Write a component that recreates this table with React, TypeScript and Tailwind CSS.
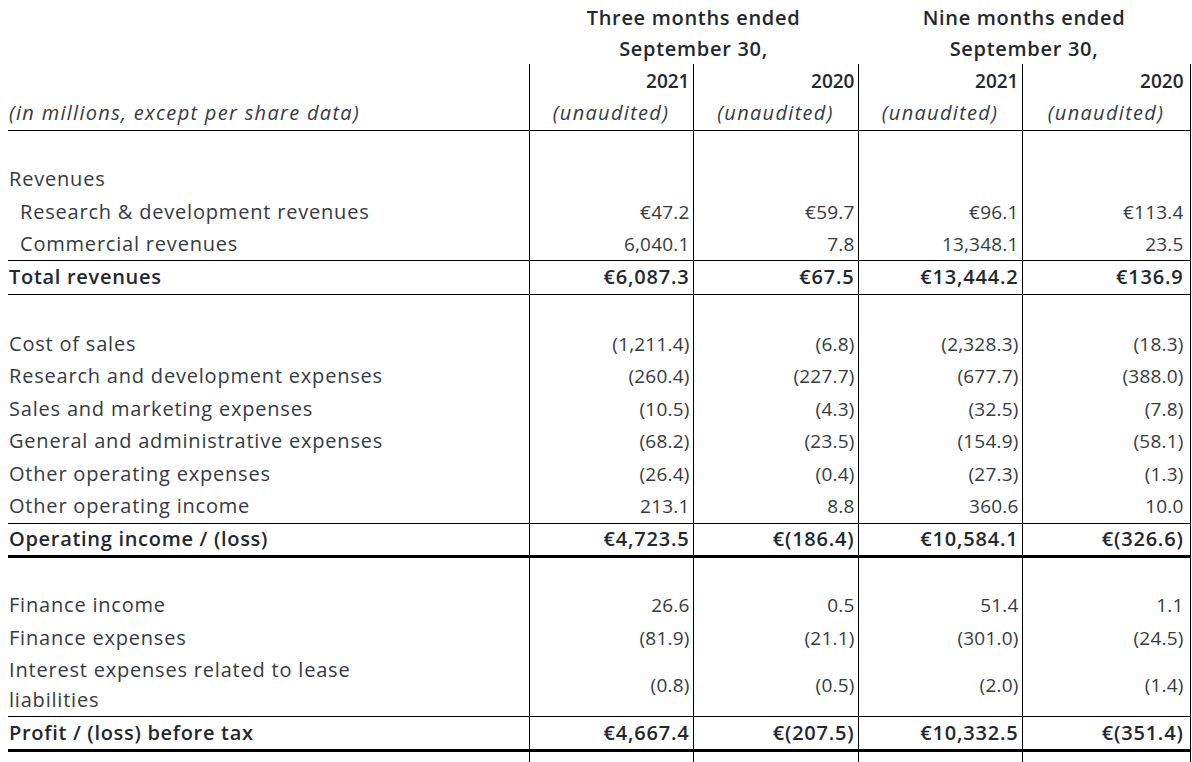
type Kind = 'blank' | 'head' | 'item' | 'sub' | 'total';

interface Row {
  kind: Kind;
  label?: string;
  values?: string[];
  h: number;
  lineBelow?: 'thin' | 'thick';
  wrap?: boolean;
}

const rows: Row[] = [
  { kind: 'blank', h: 33 },
  { kind: 'head', label: 'Revenues', h: 32 },
  { kind: 'sub', label: 'Research & development revenues', values: ['€47.2', '€59.7', '€96.1', '€113.4'], h: 33 },
  { kind: 'sub', label: 'Commercial revenues', values: ['6,040.1', '7.8', '13,348.1', '23.5'], h: 32, lineBelow: 'thin' },
  { kind: 'total', label: 'Total revenues', values: ['€6,087.3', '€67.5', '€13,444.2', '€136.9'], h: 34, lineBelow: 'thin' },
  { kind: 'blank', h: 33 },
  { kind: 'item', label: 'Cost of sales', values: ['(1,211.4)', '(6.8)', '(2,328.3)', '(18.3)'], h: 33 },
  { kind: 'item', label: 'Research and development expenses', values: ['(260.4)', '(227.7)', '(677.7)', '(388.0)'], h: 32 },
  { kind: 'item', label: 'Sales and marketing expenses', values: ['(10.5)', '(4.3)', '(32.5)', '(7.8)'], h: 33 },
  { kind: 'item', label: 'General and administrative expenses', values: ['(68.2)', '(23.5)', '(154.9)', '(58.1)'], h: 32 },
  { kind: 'item', label: 'Other operating expenses', values: ['(26.4)', '(0.4)', '(27.3)', '(1.3)'], h: 33 },
  { kind: 'item', label: 'Other operating income', values: ['213.1', '8.8', '360.6', '10.0'], h: 33, lineBelow: 'thin' },
  { kind: 'total', label: 'Operating income / (loss)', values: ['€4,723.5', '€(186.4)', '€10,584.1', '€(326.6)'], h: 33, lineBelow: 'thick' },
  { kind: 'blank', h: 33 },
  { kind: 'item', label: 'Finance income', values: ['26.6', '0.5', '51.4', '1.1'], h: 32 },
  { kind: 'item', label: 'Finance expenses', values: ['(81.9)', '(21.1)', '(301.0)', '(24.5)'], h: 33 },
  { kind: 'item', label: 'Interest expenses related to lease liabilities', values: ['(0.8)', '(0.5)', '(2.0)', '(1.4)'], h: 62, lineBelow: 'thin', wrap: true },
  { kind: 'total', label: 'Profit / (loss) before tax', values: ['€4,667.4', '€(207.5)', '€10,332.5', '€(351.4)'], h: 34, lineBelow: 'thick' },
  { kind: 'blank', h: 33 },
];

function lineClass(line?: 'thin' | 'thick') {
  if (line === 'thin') return 'border-b border-b-black';
  if (line === 'thick') return 'border-b-[3px] border-b-black';
  return '';
}

export default function App() {
  return (
    <div className="w-[1192px] h-[762px] overflow-hidden bg-white font-['Open_Sans',sans-serif] text-[#353a42]">
      <table className="ml-[8px] w-[1182px] table-fixed border-collapse text-[19px] leading-[30px]">
        <colgroup>
          <col className="w-[521px]" />
          <col className="w-[164px]" />
          <col className="w-[165px]" />
          <col className="w-[164px]" />
          <col className="w-[168px]" />
        </colgroup>
        <thead>
          {/* period headings */}
          <tr className="h-[33px]">
            <th />
            <th colSpan={2} className="pt-[2px] text-center text-[20px] font-semibold tracking-[0.035em] text-[#23272f]">
              Three months ended
            </th>
            <th colSpan={2} className="pt-[2px] text-center text-[20px] font-semibold tracking-[0.035em] text-[#23272f]">
              Nine months ended
            </th>
          </tr>
          <tr className="h-[31px]">
            <th />
            <th colSpan={2} className="text-center text-[20px] font-semibold tracking-[0.035em] text-[#23272f]">
              September 30,
            </th>
            <th colSpan={2} className="text-center text-[20px] font-semibold tracking-[0.035em] text-[#23272f]">
              September 30,
            </th>
          </tr>
          <tr className="h-[33px]">
            <th />
            {['2021', '2020', '2021', '2020'].map((y, i) => (
              <th
                key={i}
                className={`border-l border-black pr-[3px] text-right font-semibold text-[#23272f] ${i === 3 ? 'border-r pr-[6px]' : ''}`}
              >
                {y}
              </th>
            ))}
          </tr>
          <tr className="h-[33px]">
            <th className="border-b border-b-black pl-[1px] text-left text-[20px] font-normal italic tracking-[0.065em]">
              (in millions, except per share data)
            </th>
            {[0, 1, 2, 3].map((i) => (
              <th
                key={i}
                className={`border-l border-b border-black text-center text-[20px] font-normal italic tracking-[0.065em] ${i === 3 ? 'border-r' : ''}`}
              >
                (unaudited)
              </th>
            ))}
          </tr>
        </thead>
        <tbody>
          {rows.map((r, idx) => {
            const bold = r.kind === 'total';
            const line = lineClass(r.lineBelow);
            return (
              <tr key={idx} style={{ height: r.h }}>
                <td
                  className={`${line} align-middle text-[20px] ${r.kind === 'sub' ? 'pl-[12px]' : 'pl-[1px]'} ${
                    bold ? 'font-semibold tracking-[0.035em] text-[#23272f]' : 'tracking-[0.04em]'
                  }`}
                >
                  {r.wrap ? <div className="max-w-[375px]">{r.label}</div> : r.label}
                </td>
                {[0, 1, 2, 3].map((i) => (
                  <td
                    key={i}
                    className={`border-l border-l-black ${i === 3 ? 'border-r border-r-black pr-[6px]' : 'pr-[3px]'} ${line} text-right align-middle whitespace-nowrap ${
                      bold ? 'text-[20px] font-semibold tracking-[0.04em] text-[#23272f]' : 'tracking-[0.01em]'
                    }`}
                  >
                    {r.values ? r.values[i] : ''}
                  </td>
                ))}
              </tr>
            );
          })}
        </tbody>
      </table>
    </div>
  );
}
